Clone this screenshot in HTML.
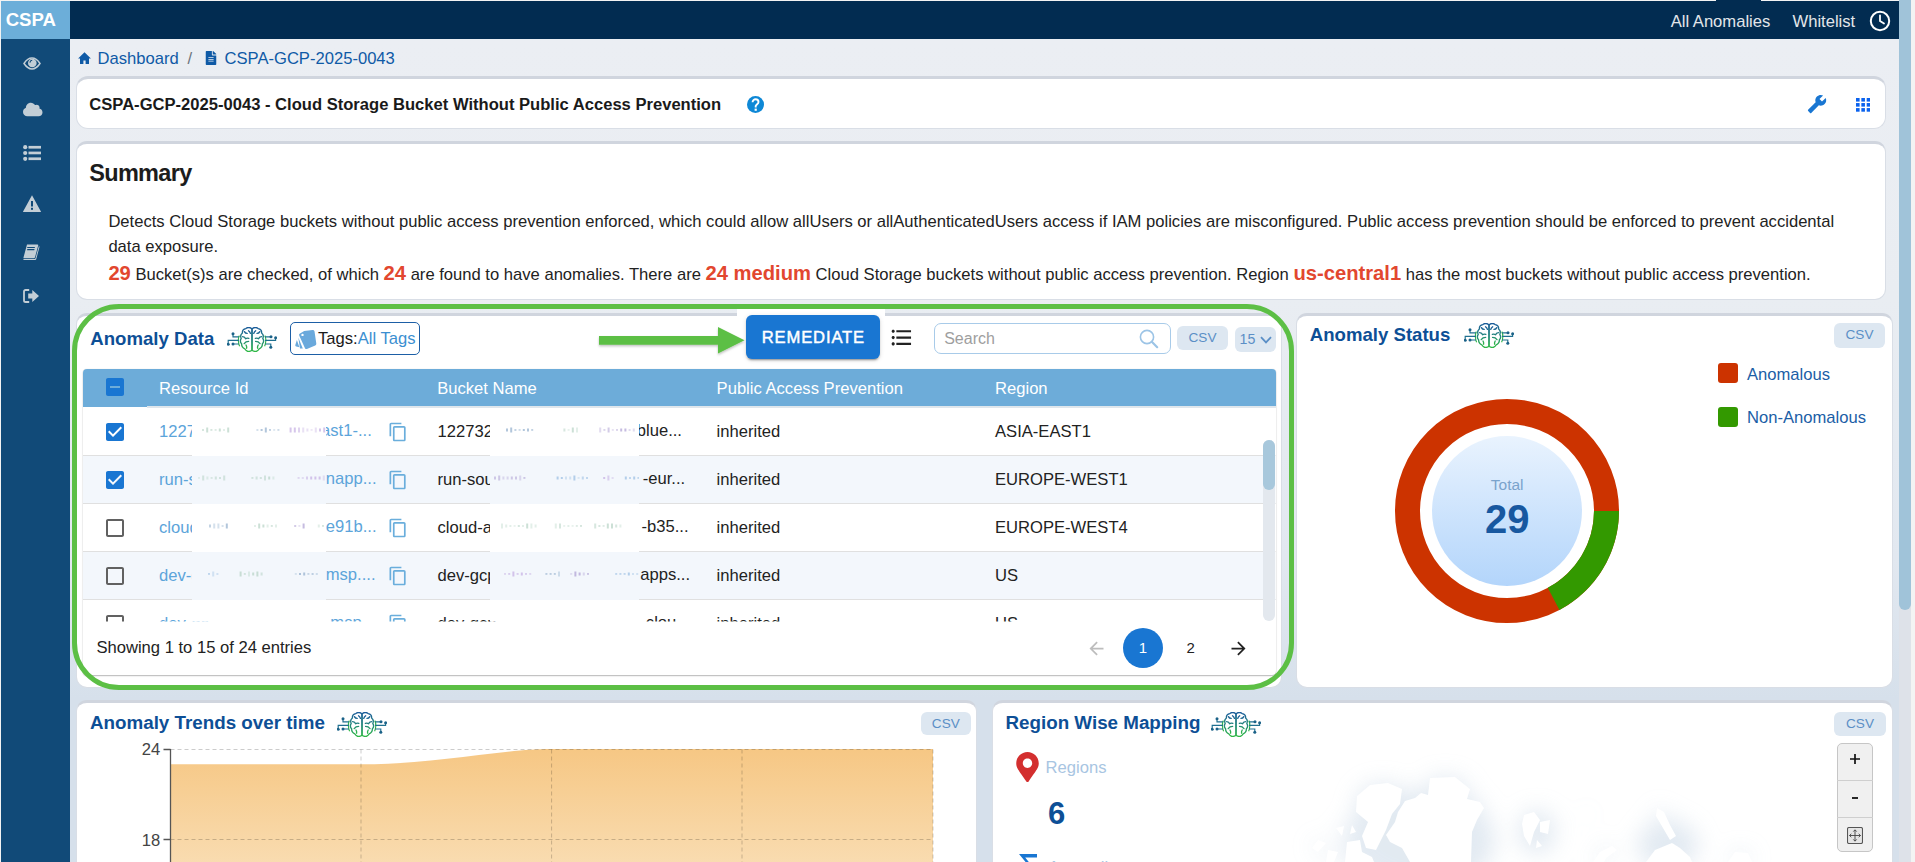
<!DOCTYPE html><html><head><meta charset="utf-8"><style>
html,body{margin:0;padding:0;width:1915px;height:862px;overflow:hidden;background:#fff;font-family:"Liberation Sans", sans-serif}
.t{position:absolute;white-space:nowrap}
.r{position:absolute;box-sizing:border-box}
.card{position:absolute;box-sizing:border-box;background:#fff;border-radius:11px;border:1px solid #d9dee6;border-top:3px solid #d0d5de}
</style></head><body>
<div class="r" style="left:0px;top:0px;width:1915px;height:862px;background:#f3f3f3"></div>
<div class="r" style="left:70px;top:39px;width:1829px;height:823px;background:linear-gradient(180deg,#ebeef3 0px,#e9edf2 260px,#e2e8f0 520px,#d6e0eb 660px,#d6e0eb 823px)"></div>
<div class="r" style="left:70px;top:1px;width:1829px;height:38px;background:#022c51"></div>
<div class="r" style="left:1716px;top:0px;width:45px;height:1px;background:#022c51"></div>
<div class="r" style="left:1px;top:1px;width:69px;height:38px;background:#6caed9"></div>
<div class="t" style="left:5.70px;top:6.80px;font-size:18.6px;line-height:25px;font-weight:700;color:#fff;">CSPA</div>
<div class="r" style="left:1px;top:39px;width:69px;height:823px;background:#114a78"></div>
<div class="r" style="left:1899px;top:0px;width:12px;height:862px;background:#dee2e9"></div>
<div class="r" style="left:1899px;top:-6px;width:12px;height:616px;background:#a0c3d9;border-radius:6px"></div>
<div class="t" style="left:1670.70px;top:11.10px;font-size:16.6px;line-height:22px;font-weight:400;color:#e2e6ea;">All Anomalies</div>
<div class="t" style="left:1792.50px;top:11.10px;font-size:16.6px;line-height:22px;font-weight:400;color:#e2e6ea;">Whitelist</div>
<svg class="r" style="left:1869px;top:9.5px;" width="22" height="22" viewBox="0 0 22 22"><circle cx="11" cy="11" r="9.2" fill="none" stroke="#fff" stroke-width="2"/><path d="M11 5.5V11l4 2.6" fill="none" stroke="#fff" stroke-width="1.8" stroke-linecap="round"/></svg>
<svg class="r" style="left:23px;top:56.5px;" width="18" height="13" viewBox="0 0 18 13"><path d="M1 6.5C3.6 2.6 6.4 1.1 9 1.1S14.4 2.6 17 6.5C14.4 10.4 11.6 11.9 9 11.9S3.6 10.4 1 6.5z" fill="none" stroke="#c3ced6" stroke-width="1.5"/><circle cx="9.3" cy="6" r="4.3" fill="#c3ced6"/><path d="M6.9 5.6A2.6 2.6 0 0 1 9.2 3.2" fill="none" stroke="#114a78" stroke-width="1.1"/></svg>
<svg class="r" style="left:23px;top:101.5px;" width="19.5" height="15" viewBox="0 32 640 448"><path fill="#c3ced6" d="M537.6 226.6c4.1-10.7 6.4-22.4 6.4-34.6 0-53-43-96-96-96-19.7 0-38.1 6-53.3 16.2C367 64.2 315.3 32 256 32c-88.4 0-160 71.6-160 160 0 2.7.1 5.4.2 8.1C40.2 219.8 0 273.2 0 336c0 79.5 64.5 144 144 144h368c70.7 0 128-57.3 128-128 0-61.9-44-113.6-102.4-125.4z"/></svg>
<svg class="r" style="left:23px;top:144.5px;" width="18" height="16" viewBox="0 0 18 16"><g fill="#c3ced6"><circle cx="2.2" cy="2.2" r="2.1"/><circle cx="2.2" cy="8" r="2.1"/><circle cx="2.2" cy="13.8" r="2.1"/><rect x="5.5" y="0.9" width="12.5" height="2.7"/><rect x="5.5" y="6.6" width="12.5" height="2.7"/><rect x="5.5" y="12.4" width="12.5" height="2.7"/></g></svg>
<svg class="r" style="left:23px;top:195px;" width="18" height="17" viewBox="0 0 18 17"><path fill="#c3ced6" d="M9 0.3L17.9 16.4a0.4 0.4 0 0 1-0.3 0.6H0.4a0.4 0.4 0 0 1-0.3-0.6z"/><rect x="8" y="6" width="2" height="5.5" fill="#114a78"/><rect x="8" y="12.8" width="2" height="2" fill="#114a78"/></svg>
<svg class="r" style="left:23px;top:244px;" width="17" height="16" viewBox="0 0 17 16"><path fill="#c3ced6" d="M4 0.5H14.5Q15.5 0.5 15.2 1.6L12 13.3Q11.7 14.2 10.8 14.2H1Q0.3 14.2 0.5 13.5zM15.8 2.3L16.6 2.6 13.2 15.2Q13 16 12.1 16H1.3Q0.4 16 0.2 15.2L0.1 14.6Q0.3 15.1 1 15.1H11.3Q12.2 15.1 12.5 14.3z"/><rect x="5.2" y="3" width="7.6" height="1.1" transform="skewX(-15)" fill="#114a78"/><rect x="5.7" y="5.1" width="7.2" height="1.1" transform="skewX(-15)" fill="#114a78"/></svg>
<svg class="r" style="left:23px;top:288.5px;" width="16" height="14" viewBox="0 0 16 14"><path fill="none" stroke="#c3ced6" stroke-width="1.8" d="M6.2 1H2.6Q1 1 1 2.6V11.4Q1 13 2.6 13H6.2"/><path fill="#c3ced6" d="M5.2 4.6H9.3V1L16 7 9.3 13V9.4H5.2z"/></svg>
<svg class="r" style="left:77.5px;top:51.5px;" width="13" height="12.5" viewBox="0 0 13 12.5"><path fill="#0f5aa6" d="M6.5 0.3L12.9 6.6H11V12.2H7.6V8.4H5.4V12.2H2V6.6H0.1z"/></svg>
<div class="t" style="left:97.50px;top:48.20px;font-size:16.6px;line-height:22px;font-weight:400;color:#0f5aa6;">Dashboard</div>
<div class="t" style="left:187.50px;top:48.20px;font-size:16.6px;line-height:22px;font-weight:400;color:#6c757d;">/</div>
<svg class="r" style="left:205px;top:51px;" width="12" height="14" viewBox="0 0 384 512"><path fill="#0f5aa6" d="M224 136V0H24C10.7 0 0 10.7 0 24v464c0 13.3 10.7 24 24 24h336c13.3 0 24-10.7 24-24V160H248c-13.2 0-24-10.8-24-24zm64 236c0 6.6-5.4 12-12 12H108c-6.6 0-12-5.4-12-12v-8c0-6.6 5.4-12 12-12h168c6.6 0 12 5.4 12 12v8zm0-64c0 6.6-5.4 12-12 12H108c-6.6 0-12-5.4-12-12v-8c0-6.6 5.4-12 12-12h168c6.6 0 12 5.4 12 12v8zm0-72v8c0 6.6-5.4 12-12 12H108c-6.6 0-12-5.4-12-12v-8c0-6.6 5.4-12 12-12h168c6.6 0 12 5.4 12 12zm96-114.1v6.1H256V0h6.1c6.4 0 12.5 2.5 17 7l97.9 98c4.5 4.5 7 10.6 7 16.9z"/></svg>
<div class="t" style="left:224.50px;top:48.20px;font-size:16.6px;line-height:22px;font-weight:400;color:#0f5aa6;">CSPA-GCP-2025-0043</div>
<div class="card" style="left:76px;top:76px;width:1810px;height:53px;border-radius:12px"></div>
<div class="t" style="left:89.30px;top:94.10px;font-size:16.59px;line-height:22px;font-weight:700;color:#1a1a1a;">CSPA-GCP-2025-0043 - Cloud Storage Bucket Without Public Access Prevention</div>
<svg class="r" style="left:746.6px;top:95.7px;" width="17" height="17" viewBox="0 0 17 17"><circle cx="8.5" cy="8.5" r="8.5" fill="#0e88d6"/><path d="M5.6 6.3C5.6 4.4 6.9 3.3 8.6 3.3S11.5 4.4 11.5 6C11.5 7.9 9.2 8.2 8.7 10V11.4" fill="none" stroke="#fff" stroke-width="1.9"/><rect x="7.6" y="12.6" width="2.2" height="2.2" fill="#fff"/></svg>
<svg class="r" style="left:1807px;top:94px;" width="20" height="20" viewBox="0 0 24 24"><path fill="#1976d2" d="M22.7 19l-9.1-9.1c.9-2.3.4-5-1.5-6.9-2-2-5-2.4-7.4-1.3L9 6 6 9 1.6 4.7C.4 7.1.9 10.1 2.9 12.1c1.9 1.9 4.6 2.4 6.9 1.5l9.1 9.1c.4.4 1 .4 1.4 0l2.3-2.3c.5-.4.5-1.1.1-1.4z" transform="translate(24,0) scale(-1,1)"/></svg>
<svg class="r" style="left:1856px;top:98.3px;" width="14.3" height="13.7" viewBox="0 0 14.3 13.7"><g fill="#0a62ee"><rect x="0" y="0" width="3.6" height="3.6"/><rect x="5.35" y="0" width="3.6" height="3.6"/><rect x="10.7" y="0" width="3.6" height="3.6"/><rect x="0" y="5.05" width="3.6" height="3.6"/><rect x="5.35" y="5.05" width="3.6" height="3.6"/><rect x="10.7" y="5.05" width="3.6" height="3.6"/><rect x="0" y="10.1" width="3.6" height="3.6"/><rect x="5.35" y="10.1" width="3.6" height="3.6"/><rect x="10.7" y="10.1" width="3.6" height="3.6"/></g></svg>
<div class="card" style="left:76px;top:141px;width:1810px;height:159px;border-radius:11px"></div>
<div class="t" style="left:89.30px;top:157.50px;font-size:23.5px;line-height:31px;font-weight:700;color:#1c1c1c;letter-spacing:-0.7px;">Summary</div>
<div class="t" style="left:108.40px;top:211.00px;font-size:16.6px;line-height:22px;font-weight:400;color:#222;">Detects Cloud Storage buckets without public access prevention enforced, which could allow allUsers or allAuthenticatedUsers access if IAM policies are misconfigured. Public access prevention should be enforced to prevent accidental</div>
<div class="t" style="left:108.40px;top:235.70px;font-size:16.6px;line-height:22px;font-weight:400;color:#222;">data exposure.</div>
<div class="t" id="l3" style="left:108.4px;top:259.5px;font-size:16.6px;line-height:26px;color:#222"><b style="color:#e2472f;font-size:20.2px">29</b> Bucket(s)s are checked, of which <b style="color:#e2472f;font-size:20.2px">24</b> are found to have anomalies. There are <b style="color:#e2472f;font-size:20.2px">24 medium</b> Cloud Storage buckets without public access prevention. Region <b style="color:#e2472f;font-size:20.2px">us-central1</b> has the most buckets without public access prevention.</div>
<div class="card" style="left:76px;top:313px;width:1206px;height:375px;border-radius:11px"></div>
<div class="t" style="left:90.30px;top:325.90px;font-size:18.6px;line-height:25px;font-weight:700;color:#0d4f96;">Anomaly Data</div>
<svg class="r" style="left:227px;top:326.7px;" width="50" height="25" viewBox="0 0 50 25"><defs><linearGradient id="bg_g" x1="0" y1="0" x2="0" y2="1"><stop offset="0" stop-color="#1b5c9a"/><stop offset="0.55" stop-color="#238a78"/><stop offset="1" stop-color="#2fb845"/></linearGradient></defs>
<g fill="none" stroke="url(#bg_g)" stroke-width="1.35" stroke-linecap="round" stroke-linejoin="round">
<path d="M25 2C24 0.3 20.5-0.2 18.8 1.6 16.6 2 15.2 3.8 15.4 6 13.8 7.2 13.4 9.6 14.2 11.4 13.2 13 13.3 15.4 14.6 16.8 14.6 19.6 16 21.2 17.8 21.8 18.8 24 21.4 25 23.2 24.2 24 24 24.7 23.5 25 23V2z"/>
<path d="M 25 2 C 26 0.3 29.5 -0.2 31.2 1.6 33.4 2 34.8 3.8 34.6 6 36.2 7.2 36.6 9.6 35.8 11.4 36.8 13 36.7 15.4 35.4 16.8 35.4 19.6 34 21.2 32.2 21.8 31.2 24 28.6 25 26.8 24.2 26 24 25.3 23.5 25 23 V 2 z"/>
<path d="M21.5 3.8c0.8 0.6 1.6 1.6 2 2.6M17.4 4.6c0.6 1.2 1.8 1.8 2.8 1.8M15.6 9.6c1.4 0.2 2.6 1 3 2.2 0.8-0.6 2.2-0.8 3.2-0.4M17.2 16.6c1-1.4 2.6-2.2 4.4-2.2M19 18c0.6 1 0.8 2.2 0.6 3.2M28.7 3.8c-0.8 0.6-1.6 1.6-2 2.6M32.8 4.6c-0.6 1.2-1.8 1.8-2.8 1.8M34.6 9.6c-1.4 0.2-2.6 1-3 2.2-0.8-0.6-2.2-0.8-3.2-0.4M33 16.6c-1-1.4-2.6-2.2-4.4-2.2M31.2 18c-0.6 1-0.8 2.2-0.6 3.2"/>
</g>
<g fill="none" stroke-width="1.15">
<path d="M12.4 8.6c-0.9 1.6-1.2 3.6-1 5.4 0.1 1.8 0.5 3.6 1.2 5.2M37.8 8.6c0.9 1.6 1.2 3.6 1 5.4-0.1 1.8-0.5 3.6-1.2 5.2" stroke="#2fb845"/>
<path d="M12 9.8H6V7M12 13.4H1.2V17M12 17H6M38 9.8H43.8M38 13.4H48.6V11M38 17H43.8V20" stroke="#1f7090"/></g>
<g fill="#1b6288"><circle cx="6" cy="6.8" r="1.5"/><circle cx="1.2" cy="17.2" r="1.5"/><circle cx="6" cy="17" r="1.5"/><circle cx="44" cy="9.8" r="1.5"/><circle cx="48.6" cy="10.8" r="1.5"/><circle cx="43.8" cy="20.2" r="1.5"/></g></svg>
<div class="r" style="left:290px;top:322px;width:130px;height:32.5px;border:1.3px solid #1d5fa6;border-radius:5px;background:#fff"></div>
<svg class="r" style="left:295px;top:329.5px;" width="22" height="20" viewBox="0 0 22 20"><path fill="#6aa9dc" d="M9.2 0.9L17.6 0.1Q19 0 19.5 1.3L21.3 13.6Q21.5 15 20.2 15.5L11.9 18.9Q10.6 19.4 10 18.2L4.2 5.4Q3.6 4 5 3.4z"/><circle cx="7.5" cy="4.9" r="1.2" fill="#fff"/><path fill="#6aa9dc" d="M3.3 7.5L7.8 18.6 5 18.4z M1.9 10L4.4 17.2 1.2 16.4Q0 16 0.3 14.9z"/></svg>
<div class="t" style="left:318px;top:326.5px;font-size:16.6px;line-height:24px;color:#1a1a1a">Tags:<span style="color:#3b8fd1">All Tags</span></div>
<div class="r" style="left:737px;top:309px;width:148px;height:8px;background:#fff"></div>
<svg class="r" style="left:596px;top:325px;" width="150" height="32" viewBox="0 0 150 32"><defs><filter id="ash" x="-5%" y="-20%" width="110%" height="160%"><feDropShadow dx="0" dy="1.5" stdDeviation="1" flood-color="#000" flood-opacity="0.25"/></filter></defs><path filter="url(#ash)" fill="#5cbf45" d="M3 11H122V2L148.5 15.3 122 28.5V19.8H3z"/></svg>
<div class="r" style="left:745.5px;top:315px;width:134.5px;height:44px;background:#1976d2;border-radius:6px;box-shadow:0 3px 1px -2px rgba(0,0,0,.2),0 2px 2px 0 rgba(0,0,0,.14),0 1px 5px 0 rgba(0,0,0,.12)"></div>
<div class="t" style="left:761.70px;top:327.20px;font-size:16.6px;line-height:22px;font-weight:400;color:#fff;letter-spacing:0.86px;-webkit-text-stroke:0.45px #fff;">REMEDIATE</div>
<svg class="r" style="left:889.4px;top:325.3px;" width="25.2" height="25.2" viewBox="0 0 24 24"><path fill="#222" d="M4 10.5c-.83 0-1.5.67-1.5 1.5s.67 1.5 1.5 1.5 1.5-.67 1.5-1.5-.67-1.5-1.5-1.5zm0-6c-.83 0-1.5.67-1.5 1.5S3.17 7.5 4 7.5 5.5 6.83 5.5 6 4.83 4.5 4 4.5zm0 12c-.83 0-1.5.68-1.5 1.5s.68 1.5 1.5 1.5 1.5-.68 1.5-1.5-.67-1.5-1.5-1.5zM7 19h14v-2H7v2zm0-6h14v-2H7v2zm0-8v2h14V5H7z"/></svg>
<div class="r" style="left:934px;top:323px;width:237px;height:30.5px;border:1px solid #a8cbe9;border-radius:7px;background:#fff"></div>
<div class="t" style="left:944.20px;top:328.10px;font-size:16px;line-height:21px;font-weight:400;color:#9e9e9e;">Search</div>
<svg class="r" style="left:1139px;top:329px;" width="20" height="20" viewBox="0 0 20 20"><circle cx="8" cy="8" r="6.6" fill="none" stroke="#9cc4e6" stroke-width="1.6"/><path d="M12.8 12.8L18.2 18.2" stroke="#9cc4e6" stroke-width="2.2" stroke-linecap="round"/></svg>
<div class="r" style="left:1177px;top:326.4px;width:51px;height:24.0px;background:#dde7f1;border-radius:6px"></div>
<div class="t" style="left:1177px;top:326.4px;width:51px;height:24.0px;line-height:24.0px;text-align:center;font-size:13.6px;color:#5b8fc6">CSV</div>
<div class="r" style="left:1235px;top:327px;width:41px;height:25px;background:#dde7f1;border-radius:6px"></div>
<div class="t" style="left:1239.60px;top:329.90px;font-size:14.2px;line-height:19px;font-weight:400;color:#5b8fc6;">15</div>
<svg class="r" style="left:1260px;top:336px;" width="12" height="8" viewBox="0 0 12 8"><path d="M1 1.2L6 6.4 11 1.2" fill="none" stroke="#5b8fc6" stroke-width="1.8"/></svg>
<div class="r" style="left:83px;top:369px;width:1193px;height:306px;background:#fff;border-radius:4px;box-shadow:0 1px 1.5px rgba(0,0,0,.28),0 0 1px rgba(0,0,0,.18)"></div>
<div class="r" style="left:83px;top:369px;width:1192.5px;height:38px;background:#6dacd9;border-radius:4px 4px 0 0"></div>
<div class="r" style="left:146.5px;top:405.8px;width:1129.0px;height:1.8000000000000114px;background:#dfe6ec"></div>
<svg class="r" style="left:103px;top:375px;" width="24" height="24" viewBox="0 0 24 24"><path fill="#1976d2" d="M19 3H5c-1.1 0-2 .9-2 2v14c0 1.1.9 2 2 2h14c1.1 0 2-.9 2-2V5c0-1.1-.9-2-2-2zm-2 10H7v-2h10v2z"/></svg>
<div class="t" style="left:159.00px;top:378.10px;font-size:16.6px;line-height:22px;font-weight:400;color:#fff;">Resource Id</div>
<div class="t" style="left:437.20px;top:378.10px;font-size:16.6px;line-height:22px;font-weight:400;color:#fff;">Bucket Name</div>
<div class="t" style="left:716.60px;top:378.10px;font-size:16.6px;line-height:22px;font-weight:400;color:#fff;">Public Access Prevention</div>
<div class="t" style="left:995.00px;top:378.10px;font-size:16.6px;line-height:22px;font-weight:400;color:#fff;">Region</div>
<div style="position:absolute;left:0;top:0;width:1915px;height:862px;clip-path:inset(407px 639.5px 240.5px 83px)">
<div class="r" style="left:83px;top:408px;width:1192.5px;height:48px;background:#ffffff;border-bottom:1px solid #e0e0e0"></div>
<svg class="r" style="left:103px;top:420px;" width="24" height="24" viewBox="0 0 24 24"><path fill="#1976d2" d="M19 3H5c-1.11 0-2 .9-2 2v14c0 1.1.89 2 2 2h14c1.11 0 2-.9 2-2V5c0-1.1-.89-2-2-2zm-9 14l-5-5 1.41-1.41L10 14.17l7.59-7.59L19 8l-9 9z"/></svg>
<div class="t" style="left:159.00px;top:421.00px;font-size:16.6px;line-height:22px;font-weight:400;color:#5ca4da;">122732</div>
<div class="t" style="right:1543.2px;top:421.2px;font-size:16.6px;line-height:20px;color:#5ca4da">east1-...</div>
<svg class="r" style="left:386px;top:419.5px;transform:scale(0.85);transform-origin:12px 12px" width="24" height="24" viewBox="0 0 24 24"><path fill="#6aaedc" d="M16 1H4c-1.1 0-2 .9-2 2v14h2V3h12V1zm3 4H8c-1.1 0-2 .9-2 2v14c0 1.1.9 2 2 2h11c1.1 0 2-.9 2-2V7c0-1.1-.9-2-2-2zm0 16H8V7h11v14z"/></svg>
<div class="t" style="left:437.50px;top:421.00px;font-size:16.6px;line-height:22px;font-weight:400;color:#222;">122732</div>
<div class="t" style="right:1233.0px;top:421.2px;font-size:16.6px;line-height:20px;color:#222">blue...</div>
<div class="t" style="left:716.60px;top:421.00px;font-size:16.6px;line-height:22px;font-weight:400;color:#222;">inherited</div>
<div class="t" style="left:995.00px;top:421.00px;font-size:16.6px;line-height:22px;font-weight:400;color:#222;">ASIA-EAST1</div>
<div class="r" style="left:192px;top:407.5px;width:134px;height:49.0px;background:#ffffff"></div>
<svg class="r" style="left:192px;top:426.2px;" width="134" height="8" viewBox="0 0 134 8"><rect x="10.0" y="3.0" width="2" height="2" fill="#b0d0c0" opacity="0.5"/><rect x="14.2" y="1.5" width="2" height="5" fill="#b0d0c0" opacity="0.65"/><rect x="18.4" y="3.2" width="2" height="1.5" fill="#b0d0c0" opacity="0.65"/><rect x="22.6" y="3.2" width="2" height="1.5" fill="#b0d0c0" opacity="0.5"/><rect x="26.8" y="2.5" width="2" height="3" fill="#b0d0c0" opacity="0.65"/><rect x="31.0" y="3.0" width="2" height="2" fill="#b0d0c0" opacity="0.35"/><rect x="35.2" y="1.5" width="2" height="5" fill="#b0d0c0" opacity="0.65"/><rect x="64.4" y="3.0" width="2" height="2" fill="#88a8c8" opacity="0.35"/><rect x="68.6" y="3.0" width="2" height="2" fill="#88a8c8" opacity="0.65"/><rect x="72.8" y="1.5" width="2" height="5" fill="#88a8c8" opacity="0.65"/><rect x="77.0" y="3.2" width="2" height="1.5" fill="#88a8c8" opacity="0.65"/><rect x="81.2" y="3.2" width="2" height="1.5" fill="#88a8c8" opacity="0.35"/><rect x="85.4" y="3.2" width="2" height="1.5" fill="#88a8c8" opacity="0.5"/><rect x="97.6" y="1.5" width="2" height="5" fill="#c0a8e0" opacity="0.65"/><rect x="101.8" y="1.5" width="2" height="5" fill="#c0a8e0" opacity="0.65"/><rect x="106.0" y="1.5" width="2" height="5" fill="#c0a8e0" opacity="0.5"/><rect x="110.2" y="1.5" width="2" height="5" fill="#c0a8e0" opacity="0.35"/><rect x="114.4" y="2.5" width="2" height="3" fill="#c0a8e0" opacity="0.35"/><rect x="118.6" y="3.2" width="2" height="1.5" fill="#c0a8e0" opacity="0.35"/><rect x="122.8" y="1.5" width="2" height="5" fill="#c0a8e0" opacity="0.35"/><rect x="127.0" y="2.5" width="2" height="3" fill="#c0a8e0" opacity="0.65"/><rect x="131.2" y="1.5" width="2" height="5" fill="#c0a8e0" opacity="0.65"/></svg>
<div class="r" style="left:490px;top:407.5px;width:149px;height:49.0px;background:#ffffff"></div>
<svg class="r" style="left:490px;top:426.2px;" width="149" height="8" viewBox="0 0 149 8"><rect x="16.0" y="2.5" width="2" height="3" fill="#88a8c8" opacity="0.65"/><rect x="20.2" y="1.5" width="2" height="5" fill="#88a8c8" opacity="0.65"/><rect x="24.4" y="3.0" width="2" height="2" fill="#88a8c8" opacity="0.5"/><rect x="28.6" y="3.2" width="2" height="1.5" fill="#88a8c8" opacity="0.5"/><rect x="32.8" y="3.0" width="2" height="2" fill="#88a8c8" opacity="0.65"/><rect x="37.0" y="2.5" width="2" height="3" fill="#88a8c8" opacity="0.65"/><rect x="41.2" y="3.2" width="2" height="1.5" fill="#88a8c8" opacity="0.65"/><rect x="73.4" y="2.5" width="2" height="3" fill="#b0d0c0" opacity="0.5"/><rect x="77.6" y="3.2" width="2" height="1.5" fill="#b0d0c0" opacity="0.35"/><rect x="81.8" y="1.5" width="2" height="5" fill="#b0d0c0" opacity="0.65"/><rect x="86.0" y="1.5" width="2" height="5" fill="#b0d0c0" opacity="0.35"/><rect x="109.2" y="1.5" width="2" height="5" fill="#a898d0" opacity="0.35"/><rect x="113.4" y="3.2" width="2" height="1.5" fill="#a898d0" opacity="0.5"/><rect x="117.6" y="1.5" width="2" height="5" fill="#a898d0" opacity="0.5"/><rect x="121.8" y="3.2" width="2" height="1.5" fill="#a898d0" opacity="0.35"/><rect x="126.0" y="3.2" width="2" height="1.5" fill="#a898d0" opacity="0.5"/><rect x="130.2" y="2.5" width="2" height="3" fill="#a898d0" opacity="0.65"/><rect x="134.4" y="2.5" width="2" height="3" fill="#a898d0" opacity="0.65"/><rect x="138.6" y="3.0" width="2" height="2" fill="#a898d0" opacity="0.35"/><rect x="142.8" y="2.5" width="2" height="3" fill="#a898d0" opacity="0.35"/></svg>
<div class="r" style="left:83px;top:456px;width:1192.5px;height:48px;background:#f3f7fc;border-bottom:1px solid #e0e0e0"></div>
<svg class="r" style="left:103px;top:468px;" width="24" height="24" viewBox="0 0 24 24"><path fill="#1976d2" d="M19 3H5c-1.11 0-2 .9-2 2v14c0 1.1.89 2 2 2h14c1.11 0 2-.9 2-2V5c0-1.1-.89-2-2-2zm-9 14l-5-5 1.41-1.41L10 14.17l7.59-7.59L19 8l-9 9z"/></svg>
<div class="t" style="left:159.00px;top:469.00px;font-size:16.6px;line-height:22px;font-weight:400;color:#5ca4da;">run-sou</div>
<div class="t" style="right:1538.5px;top:469.2px;font-size:16.6px;line-height:20px;color:#5ca4da">napp...</div>
<svg class="r" style="left:386px;top:467.5px;transform:scale(0.85);transform-origin:12px 12px" width="24" height="24" viewBox="0 0 24 24"><path fill="#6aaedc" d="M16 1H4c-1.1 0-2 .9-2 2v14h2V3h12V1zm3 4H8c-1.1 0-2 .9-2 2v14c0 1.1.9 2 2 2h11c1.1 0 2-.9 2-2V7c0-1.1-.9-2-2-2zm0 16H8V7h11v14z"/></svg>
<div class="t" style="left:437.50px;top:469.00px;font-size:16.6px;line-height:22px;font-weight:400;color:#222;">run-sou</div>
<div class="t" style="right:1229.8px;top:469.2px;font-size:16.6px;line-height:20px;color:#222">-eur...</div>
<div class="t" style="left:716.60px;top:469.00px;font-size:16.6px;line-height:22px;font-weight:400;color:#222;">inherited</div>
<div class="t" style="left:995.00px;top:469.00px;font-size:16.6px;line-height:22px;font-weight:400;color:#222;">EUROPE-WEST1</div>
<div class="r" style="left:192px;top:455.5px;width:134px;height:49.0px;background:#f3f7fc"></div>
<svg class="r" style="left:192px;top:474.2px;" width="134" height="8" viewBox="0 0 134 8"><rect x="6.0" y="3.2" width="2" height="1.5" fill="#b0d0c0" opacity="0.35"/><rect x="10.2" y="1.5" width="2" height="5" fill="#b0d0c0" opacity="0.5"/><rect x="14.4" y="2.5" width="2" height="3" fill="#b0d0c0" opacity="0.35"/><rect x="18.6" y="3.2" width="2" height="1.5" fill="#b0d0c0" opacity="0.5"/><rect x="22.8" y="2.5" width="2" height="3" fill="#b0d0c0" opacity="0.5"/><rect x="27.0" y="3.0" width="2" height="2" fill="#b0d0c0" opacity="0.5"/><rect x="31.2" y="1.5" width="2" height="5" fill="#b0d0c0" opacity="0.5"/><rect x="59.4" y="3.2" width="2" height="1.5" fill="#b0d0c0" opacity="0.65"/><rect x="63.6" y="2.5" width="2" height="3" fill="#b0d0c0" opacity="0.5"/><rect x="67.8" y="3.0" width="2" height="2" fill="#b0d0c0" opacity="0.5"/><rect x="72.0" y="1.5" width="2" height="5" fill="#b0d0c0" opacity="0.5"/><rect x="76.2" y="2.5" width="2" height="3" fill="#b0d0c0" opacity="0.65"/><rect x="80.4" y="2.5" width="2" height="3" fill="#b0d0c0" opacity="0.35"/><rect x="105.6" y="3.2" width="2" height="1.5" fill="#c0a8e0" opacity="0.5"/><rect x="109.8" y="3.0" width="2" height="2" fill="#c0a8e0" opacity="0.35"/><rect x="114.0" y="2.5" width="2" height="3" fill="#c0a8e0" opacity="0.5"/><rect x="118.2" y="2.5" width="2" height="3" fill="#c0a8e0" opacity="0.65"/><rect x="122.4" y="2.5" width="2" height="3" fill="#c0a8e0" opacity="0.65"/><rect x="126.6" y="2.5" width="2" height="3" fill="#c0a8e0" opacity="0.65"/><rect x="130.8" y="1.5" width="2" height="5" fill="#c0a8e0" opacity="0.35"/></svg>
<div class="r" style="left:490px;top:455.5px;width:149px;height:49.0px;background:#f3f7fc"></div>
<svg class="r" style="left:490px;top:474.2px;" width="149" height="8" viewBox="0 0 149 8"><rect x="4.0" y="2.5" width="2" height="3" fill="#a898d0" opacity="0.5"/><rect x="8.2" y="1.5" width="2" height="5" fill="#a898d0" opacity="0.5"/><rect x="12.4" y="2.5" width="2" height="3" fill="#a898d0" opacity="0.35"/><rect x="16.6" y="2.5" width="2" height="3" fill="#a898d0" opacity="0.35"/><rect x="20.8" y="2.5" width="2" height="3" fill="#a898d0" opacity="0.5"/><rect x="25.0" y="2.5" width="2" height="3" fill="#a898d0" opacity="0.5"/><rect x="29.2" y="1.5" width="2" height="5" fill="#a898d0" opacity="0.35"/><rect x="33.4" y="3.2" width="2" height="1.5" fill="#a898d0" opacity="0.65"/><rect x="66.6" y="2.5" width="2" height="3" fill="#90b8e0" opacity="0.65"/><rect x="70.8" y="3.0" width="2" height="2" fill="#90b8e0" opacity="0.65"/><rect x="75.0" y="2.5" width="2" height="3" fill="#90b8e0" opacity="0.35"/><rect x="79.2" y="2.5" width="2" height="3" fill="#90b8e0" opacity="0.35"/><rect x="83.4" y="1.5" width="2" height="5" fill="#90b8e0" opacity="0.65"/><rect x="87.6" y="3.2" width="2" height="1.5" fill="#90b8e0" opacity="0.35"/><rect x="91.8" y="2.5" width="2" height="3" fill="#90b8e0" opacity="0.5"/><rect x="96.0" y="3.0" width="2" height="2" fill="#90b8e0" opacity="0.5"/><rect x="113.2" y="3.0" width="2" height="2" fill="#c0a8e0" opacity="0.65"/><rect x="117.4" y="1.5" width="2" height="5" fill="#c0a8e0" opacity="0.5"/><rect x="121.6" y="3.0" width="2" height="2" fill="#c0a8e0" opacity="0.35"/><rect x="134.8" y="2.5" width="2" height="3" fill="#90b8e0" opacity="0.65"/><rect x="139.0" y="3.0" width="2" height="2" fill="#90b8e0" opacity="0.5"/><rect x="143.2" y="2.5" width="2" height="3" fill="#90b8e0" opacity="0.65"/><rect x="147.4" y="3.2" width="2" height="1.5" fill="#90b8e0" opacity="0.65"/><rect x="151.6" y="2.5" width="2" height="3" fill="#90b8e0" opacity="0.65"/><rect x="155.8" y="3.0" width="2" height="2" fill="#90b8e0" opacity="0.5"/><rect x="160.0" y="2.5" width="2" height="3" fill="#90b8e0" opacity="0.65"/></svg>
<div class="r" style="left:83px;top:504px;width:1192.5px;height:48px;background:#ffffff;border-bottom:1px solid #e0e0e0"></div>
<svg class="r" style="left:103px;top:516px;" width="24" height="24" viewBox="0 0 24 24"><path fill="#616161" d="M19 5v14H5V5h14m0-2H5c-1.1 0-2 .9-2 2v14c0 1.1.9 2 2 2h14c1.1 0 2-.9 2-2V5c0-1.1-.9-2-2-2z"/></svg>
<div class="t" style="left:159.00px;top:517.00px;font-size:16.6px;line-height:22px;font-weight:400;color:#5ca4da;">cloud-</div>
<div class="t" style="right:1538.5px;top:517.2px;font-size:16.6px;line-height:20px;color:#5ca4da">e91b...</div>
<svg class="r" style="left:386px;top:515.5px;transform:scale(0.85);transform-origin:12px 12px" width="24" height="24" viewBox="0 0 24 24"><path fill="#6aaedc" d="M16 1H4c-1.1 0-2 .9-2 2v14h2V3h12V1zm3 4H8c-1.1 0-2 .9-2 2v14c0 1.1.9 2 2 2h11c1.1 0 2-.9 2-2V7c0-1.1-.9-2-2-2zm0 16H8V7h11v14z"/></svg>
<div class="t" style="left:437.50px;top:517.00px;font-size:16.6px;line-height:22px;font-weight:400;color:#222;">cloud-a</div>
<div class="t" style="right:1226.5px;top:517.2px;font-size:16.6px;line-height:20px;color:#222">-b35...</div>
<div class="t" style="left:716.60px;top:517.00px;font-size:16.6px;line-height:22px;font-weight:400;color:#222;">inherited</div>
<div class="t" style="left:995.00px;top:517.00px;font-size:16.6px;line-height:22px;font-weight:400;color:#222;">EUROPE-WEST4</div>
<div class="r" style="left:192px;top:503.5px;width:134px;height:49.0px;background:#ffffff"></div>
<svg class="r" style="left:192px;top:522.2px;" width="134" height="8" viewBox="0 0 134 8"><rect x="17.0" y="2.5" width="2" height="3" fill="#88a8c8" opacity="0.5"/><rect x="21.2" y="1.5" width="2" height="5" fill="#88a8c8" opacity="0.35"/><rect x="25.4" y="1.5" width="2" height="5" fill="#88a8c8" opacity="0.35"/><rect x="29.6" y="3.0" width="2" height="2" fill="#88a8c8" opacity="0.35"/><rect x="33.8" y="1.5" width="2" height="5" fill="#88a8c8" opacity="0.65"/><rect x="62.0" y="3.0" width="2" height="2" fill="#b0d0c0" opacity="0.35"/><rect x="66.2" y="1.5" width="2" height="5" fill="#b0d0c0" opacity="0.65"/><rect x="70.4" y="2.5" width="2" height="3" fill="#b0d0c0" opacity="0.65"/><rect x="74.6" y="2.5" width="2" height="3" fill="#b0d0c0" opacity="0.35"/><rect x="78.8" y="3.2" width="2" height="1.5" fill="#b0d0c0" opacity="0.65"/><rect x="83.0" y="2.5" width="2" height="3" fill="#b0d0c0" opacity="0.35"/><rect x="102.2" y="3.0" width="2" height="2" fill="#a898d0" opacity="0.5"/><rect x="106.4" y="3.2" width="2" height="1.5" fill="#a898d0" opacity="0.35"/><rect x="110.6" y="1.5" width="2" height="5" fill="#a898d0" opacity="0.65"/><rect x="125.8" y="2.5" width="2" height="3" fill="#b0d0c0" opacity="0.35"/><rect x="130.0" y="3.2" width="2" height="1.5" fill="#b0d0c0" opacity="0.65"/><rect x="134.2" y="1.5" width="2" height="5" fill="#b0d0c0" opacity="0.35"/><rect x="138.4" y="3.2" width="2" height="1.5" fill="#b0d0c0" opacity="0.5"/></svg>
<div class="r" style="left:490px;top:503.5px;width:149px;height:49.0px;background:#ffffff"></div>
<svg class="r" style="left:490px;top:522.2px;" width="149" height="8" viewBox="0 0 149 8"><rect x="11.0" y="1.5" width="2" height="5" fill="#b0d0c0" opacity="0.35"/><rect x="15.2" y="2.5" width="2" height="3" fill="#b0d0c0" opacity="0.35"/><rect x="19.4" y="3.0" width="2" height="2" fill="#b0d0c0" opacity="0.35"/><rect x="23.6" y="3.2" width="2" height="1.5" fill="#b0d0c0" opacity="0.35"/><rect x="27.8" y="3.0" width="2" height="2" fill="#b0d0c0" opacity="0.5"/><rect x="32.0" y="3.0" width="2" height="2" fill="#b0d0c0" opacity="0.35"/><rect x="36.2" y="1.5" width="2" height="5" fill="#b0d0c0" opacity="0.65"/><rect x="40.4" y="1.5" width="2" height="5" fill="#b0d0c0" opacity="0.35"/><rect x="44.6" y="2.5" width="2" height="3" fill="#b0d0c0" opacity="0.35"/><rect x="64.8" y="1.5" width="2" height="5" fill="#b0d0c0" opacity="0.35"/><rect x="69.0" y="1.5" width="2" height="5" fill="#b0d0c0" opacity="0.5"/><rect x="73.2" y="3.2" width="2" height="1.5" fill="#b0d0c0" opacity="0.35"/><rect x="77.4" y="3.0" width="2" height="2" fill="#b0d0c0" opacity="0.35"/><rect x="81.6" y="3.2" width="2" height="1.5" fill="#b0d0c0" opacity="0.35"/><rect x="85.8" y="3.2" width="2" height="1.5" fill="#b0d0c0" opacity="0.5"/><rect x="90.0" y="3.2" width="2" height="1.5" fill="#b0d0c0" opacity="0.65"/><rect x="104.2" y="1.5" width="2" height="5" fill="#b0d0c0" opacity="0.5"/><rect x="108.4" y="3.0" width="2" height="2" fill="#b0d0c0" opacity="0.5"/><rect x="112.6" y="3.2" width="2" height="1.5" fill="#b0d0c0" opacity="0.5"/><rect x="116.8" y="1.5" width="2" height="5" fill="#b0d0c0" opacity="0.65"/><rect x="121.0" y="1.5" width="2" height="5" fill="#b0d0c0" opacity="0.65"/><rect x="125.2" y="2.5" width="2" height="3" fill="#b0d0c0" opacity="0.5"/><rect x="129.4" y="2.5" width="2" height="3" fill="#b0d0c0" opacity="0.35"/></svg>
<div class="r" style="left:83px;top:552px;width:1192.5px;height:48px;background:#f3f7fc;border-bottom:1px solid #e0e0e0"></div>
<svg class="r" style="left:103px;top:564px;" width="24" height="24" viewBox="0 0 24 24"><path fill="#616161" d="M19 5v14H5V5h14m0-2H5c-1.1 0-2 .9-2 2v14c0 1.1.9 2 2 2h14c1.1 0 2-.9 2-2V5c0-1.1-.9-2-2-2z"/></svg>
<div class="t" style="left:159.00px;top:565.00px;font-size:16.6px;line-height:22px;font-weight:400;color:#5ca4da;">dev-gc</div>
<div class="t" style="right:1539.5px;top:565.2px;font-size:16.6px;line-height:20px;color:#5ca4da">msp....</div>
<svg class="r" style="left:386px;top:563.5px;transform:scale(0.85);transform-origin:12px 12px" width="24" height="24" viewBox="0 0 24 24"><path fill="#6aaedc" d="M16 1H4c-1.1 0-2 .9-2 2v14h2V3h12V1zm3 4H8c-1.1 0-2 .9-2 2v14c0 1.1.9 2 2 2h11c1.1 0 2-.9 2-2V7c0-1.1-.9-2-2-2zm0 16H8V7h11v14z"/></svg>
<div class="t" style="left:437.50px;top:565.00px;font-size:16.6px;line-height:22px;font-weight:400;color:#222;">dev-gcp</div>
<div class="t" style="right:1224.9px;top:565.2px;font-size:16.6px;line-height:20px;color:#222">apps...</div>
<div class="t" style="left:716.60px;top:565.00px;font-size:16.6px;line-height:22px;font-weight:400;color:#222;">inherited</div>
<div class="t" style="left:995.00px;top:565.00px;font-size:16.6px;line-height:22px;font-weight:400;color:#222;">US</div>
<div class="r" style="left:192px;top:551.5px;width:134px;height:49.0px;background:#f3f7fc"></div>
<svg class="r" style="left:192px;top:570.2px;" width="134" height="8" viewBox="0 0 134 8"><rect x="16.0" y="3.2" width="2" height="1.5" fill="#90b8e0" opacity="0.65"/><rect x="20.2" y="1.5" width="2" height="5" fill="#90b8e0" opacity="0.35"/><rect x="24.4" y="3.0" width="2" height="2" fill="#90b8e0" opacity="0.35"/><rect x="47.6" y="1.5" width="2" height="5" fill="#b0d0c0" opacity="0.65"/><rect x="51.8" y="3.2" width="2" height="1.5" fill="#b0d0c0" opacity="0.65"/><rect x="56.0" y="1.5" width="2" height="5" fill="#b0d0c0" opacity="0.35"/><rect x="60.2" y="2.5" width="2" height="3" fill="#b0d0c0" opacity="0.65"/><rect x="64.4" y="1.5" width="2" height="5" fill="#b0d0c0" opacity="0.65"/><rect x="68.6" y="2.5" width="2" height="3" fill="#b0d0c0" opacity="0.5"/><rect x="102.8" y="3.2" width="2" height="1.5" fill="#88a8c8" opacity="0.35"/><rect x="107.0" y="3.0" width="2" height="2" fill="#88a8c8" opacity="0.65"/><rect x="111.2" y="2.5" width="2" height="3" fill="#88a8c8" opacity="0.65"/><rect x="115.4" y="3.2" width="2" height="1.5" fill="#88a8c8" opacity="0.5"/><rect x="119.6" y="3.0" width="2" height="2" fill="#88a8c8" opacity="0.5"/><rect x="123.8" y="3.0" width="2" height="2" fill="#88a8c8" opacity="0.35"/></svg>
<div class="r" style="left:490px;top:551.5px;width:149px;height:49.0px;background:#f3f7fc"></div>
<svg class="r" style="left:490px;top:570.2px;" width="149" height="8" viewBox="0 0 149 8"><rect x="14.0" y="3.2" width="2" height="1.5" fill="#c0a8e0" opacity="0.5"/><rect x="18.2" y="3.2" width="2" height="1.5" fill="#c0a8e0" opacity="0.65"/><rect x="22.4" y="1.5" width="2" height="5" fill="#c0a8e0" opacity="0.65"/><rect x="26.6" y="3.2" width="2" height="1.5" fill="#c0a8e0" opacity="0.65"/><rect x="30.8" y="2.5" width="2" height="3" fill="#c0a8e0" opacity="0.65"/><rect x="35.0" y="3.2" width="2" height="1.5" fill="#c0a8e0" opacity="0.65"/><rect x="39.2" y="3.2" width="2" height="1.5" fill="#c0a8e0" opacity="0.5"/><rect x="55.4" y="3.2" width="2" height="1.5" fill="#88a8c8" opacity="0.65"/><rect x="59.6" y="3.2" width="2" height="1.5" fill="#88a8c8" opacity="0.65"/><rect x="63.8" y="3.2" width="2" height="1.5" fill="#88a8c8" opacity="0.65"/><rect x="68.0" y="1.5" width="2" height="5" fill="#88a8c8" opacity="0.35"/><rect x="80.2" y="3.2" width="2" height="1.5" fill="#a898d0" opacity="0.35"/><rect x="84.4" y="1.5" width="2" height="5" fill="#a898d0" opacity="0.65"/><rect x="88.6" y="2.5" width="2" height="3" fill="#a898d0" opacity="0.65"/><rect x="92.8" y="2.5" width="2" height="3" fill="#a898d0" opacity="0.35"/><rect x="97.0" y="3.2" width="2" height="1.5" fill="#a898d0" opacity="0.65"/><rect x="125.2" y="3.2" width="2" height="1.5" fill="#90b8e0" opacity="0.65"/><rect x="129.4" y="3.2" width="2" height="1.5" fill="#90b8e0" opacity="0.65"/><rect x="133.6" y="3.2" width="2" height="1.5" fill="#90b8e0" opacity="0.65"/><rect x="137.8" y="2.5" width="2" height="3" fill="#90b8e0" opacity="0.65"/><rect x="142.0" y="3.0" width="2" height="2" fill="#90b8e0" opacity="0.35"/><rect x="146.2" y="3.0" width="2" height="2" fill="#90b8e0" opacity="0.35"/><rect x="150.4" y="3.0" width="2" height="2" fill="#90b8e0" opacity="0.5"/></svg>
<div class="r" style="left:83px;top:600px;width:1192.5px;height:48px;background:#ffffff;border-bottom:1px solid #e0e0e0"></div>
<svg class="r" style="left:103px;top:612px;" width="24" height="24" viewBox="0 0 24 24"><path fill="#616161" d="M19 5v14H5V5h14m0-2H5c-1.1 0-2 .9-2 2v14c0 1.1.9 2 2 2h14c1.1 0 2-.9 2-2V5c0-1.1-.9-2-2-2z"/></svg>
<div class="t" style="left:159.00px;top:613.00px;font-size:16.6px;line-height:22px;font-weight:400;color:#5ca4da;">dev-gc</div>
<div class="t" style="right:1539.5px;top:613.2px;font-size:16.6px;line-height:20px;color:#5ca4da">msp...</div>
<svg class="r" style="left:386px;top:611.5px;transform:scale(0.85);transform-origin:12px 12px" width="24" height="24" viewBox="0 0 24 24"><path fill="#6aaedc" d="M16 1H4c-1.1 0-2 .9-2 2v14h2V3h12V1zm3 4H8c-1.1 0-2 .9-2 2v14c0 1.1.9 2 2 2h11c1.1 0 2-.9 2-2V7c0-1.1-.9-2-2-2zm0 16H8V7h11v14z"/></svg>
<div class="t" style="left:437.50px;top:613.00px;font-size:16.6px;line-height:22px;font-weight:400;color:#222;">dev-gcp</div>
<div class="t" style="right:1224.9px;top:613.2px;font-size:16.6px;line-height:20px;color:#222">clou...</div>
<div class="t" style="left:716.60px;top:613.00px;font-size:16.6px;line-height:22px;font-weight:400;color:#222;">inherited</div>
<div class="t" style="left:995.00px;top:613.00px;font-size:16.6px;line-height:22px;font-weight:400;color:#222;">US</div>
<div class="r" style="left:192px;top:599.5px;width:134px;height:49.0px;background:#ffffff"></div>
<div class="r" style="left:490px;top:599.5px;width:149px;height:49.0px;background:#ffffff"></div>
</div>
<div class="r" style="left:1263.4px;top:439.6px;width:11.399999999999864px;height:181.89999999999998px;background:#e3e8ee;border-radius:6px"></div>
<div class="r" style="left:1263.4px;top:439.6px;width:11.399999999999864px;height:50.39999999999998px;background:#a8c8dc;border-radius:6px"></div>
<div class="t" style="left:96.40px;top:637.10px;font-size:16.6px;line-height:22px;font-weight:400;color:#222;">Showing 1 to 15 of 24 entries</div>
<svg class="r" style="left:1085.5px;top:637.5px;" width="21" height="21" viewBox="0 0 24 24"><path fill="#bdbdbd" d="M20 11H7.83l5.59-5.59L12 4l-8 8 8 8 1.41-1.41L7.83 13H20v-2z"/></svg>
<div class="r" style="left:1123px;top:628px;width:40px;height:40px;background:#1976d2;border-radius:50%"></div>
<div class="t" style="left:1123px;top:628px;width:40px;height:40px;line-height:40px;text-align:center;font-size:15px;color:#fff">1</div>
<div class="t" style="left:1170.6px;top:628px;width:40px;height:40px;line-height:40px;text-align:center;font-size:15px;color:#222">2</div>
<svg class="r" style="left:1227.5px;top:637.5px;" width="21" height="21" viewBox="0 0 24 24"><path fill="#222" d="M12 4l-1.41 1.41L16.17 11H4v2h12.17l-5.58 5.59L12 20l8-8z"/></svg>
<div class="r" style="left:72px;top:304px;width:1222px;height:385.5px;border:5px solid #5cbf45;border-radius:47px"></div>
<div class="card" style="left:1295.5px;top:313px;width:597px;height:375px;border-radius:11px"></div>
<div class="t" style="left:1309.80px;top:321.80px;font-size:18.6px;line-height:25px;font-weight:700;color:#0d4f96;">Anomaly Status</div>
<svg class="r" style="left:1464px;top:323px;" width="50" height="25" viewBox="0 0 50 25"><defs><linearGradient id="bg_g" x1="0" y1="0" x2="0" y2="1"><stop offset="0" stop-color="#1b5c9a"/><stop offset="0.55" stop-color="#238a78"/><stop offset="1" stop-color="#2fb845"/></linearGradient></defs>
<g fill="none" stroke="url(#bg_g)" stroke-width="1.35" stroke-linecap="round" stroke-linejoin="round">
<path d="M25 2C24 0.3 20.5-0.2 18.8 1.6 16.6 2 15.2 3.8 15.4 6 13.8 7.2 13.4 9.6 14.2 11.4 13.2 13 13.3 15.4 14.6 16.8 14.6 19.6 16 21.2 17.8 21.8 18.8 24 21.4 25 23.2 24.2 24 24 24.7 23.5 25 23V2z"/>
<path d="M 25 2 C 26 0.3 29.5 -0.2 31.2 1.6 33.4 2 34.8 3.8 34.6 6 36.2 7.2 36.6 9.6 35.8 11.4 36.8 13 36.7 15.4 35.4 16.8 35.4 19.6 34 21.2 32.2 21.8 31.2 24 28.6 25 26.8 24.2 26 24 25.3 23.5 25 23 V 2 z"/>
<path d="M21.5 3.8c0.8 0.6 1.6 1.6 2 2.6M17.4 4.6c0.6 1.2 1.8 1.8 2.8 1.8M15.6 9.6c1.4 0.2 2.6 1 3 2.2 0.8-0.6 2.2-0.8 3.2-0.4M17.2 16.6c1-1.4 2.6-2.2 4.4-2.2M19 18c0.6 1 0.8 2.2 0.6 3.2M28.7 3.8c-0.8 0.6-1.6 1.6-2 2.6M32.8 4.6c-0.6 1.2-1.8 1.8-2.8 1.8M34.6 9.6c-1.4 0.2-2.6 1-3 2.2-0.8-0.6-2.2-0.8-3.2-0.4M33 16.6c-1-1.4-2.6-2.2-4.4-2.2M31.2 18c-0.6 1-0.8 2.2-0.6 3.2"/>
</g>
<g fill="none" stroke-width="1.15">
<path d="M12.4 8.6c-0.9 1.6-1.2 3.6-1 5.4 0.1 1.8 0.5 3.6 1.2 5.2M37.8 8.6c0.9 1.6 1.2 3.6 1 5.4-0.1 1.8-0.5 3.6-1.2 5.2" stroke="#2fb845"/>
<path d="M12 9.8H6V7M12 13.4H1.2V17M12 17H6M38 9.8H43.8M38 13.4H48.6V11M38 17H43.8V20" stroke="#1f7090"/></g>
<g fill="#1b6288"><circle cx="6" cy="6.8" r="1.5"/><circle cx="1.2" cy="17.2" r="1.5"/><circle cx="6" cy="17" r="1.5"/><circle cx="44" cy="9.8" r="1.5"/><circle cx="48.6" cy="10.8" r="1.5"/><circle cx="43.8" cy="20.2" r="1.5"/></g></svg>
<div class="r" style="left:1834px;top:322.7px;width:51px;height:24.900000000000034px;background:#dde7f1;border-radius:6px"></div>
<div class="t" style="left:1834px;top:322.7px;width:51px;height:24.900000000000034px;line-height:24.900000000000034px;text-align:center;font-size:13.6px;color:#5b8fc6">CSV</div>
<div class="r" style="left:1717.6px;top:363.4px;width:20.40000000000009px;height:19.900000000000034px;background:#cc3300;border-radius:3px"></div>
<div class="t" style="left:1747.00px;top:364.30px;font-size:16.6px;line-height:22px;font-weight:400;color:#1b5ea6;">Anomalous</div>
<div class="r" style="left:1717.6px;top:406.8px;width:20.40000000000009px;height:19.899999999999977px;background:#339900;border-radius:3px"></div>
<div class="t" style="left:1747.00px;top:406.90px;font-size:16.6px;line-height:22px;font-weight:400;color:#1b5ea6;">Non-Anomalous</div>
<svg class="r" style="left:1395px;top:398.5px;" width="224" height="224" viewBox="0 0 224 224"><defs><linearGradient id="tg" x1="0" y1="0" x2="0" y2="1"><stop offset="0" stop-color="#e9f3fe"/><stop offset="1" stop-color="#b3d5fb"/></linearGradient></defs><circle cx="112" cy="112" r="99.5" fill="none" stroke="#cc3300" stroke-width="25"/><path d="M224.00 112.00A112 112 0 0 1 164.46 210.95L152.75 188.87A87 87 0 0 0 199.00 112.00z" fill="#339900"/><circle cx="112" cy="112" r="75" fill="url(#tg)"/></svg>
<div class="t" style="left:1490.80px;top:473.80px;font-size:15.5px;line-height:21px;font-weight:400;color:#7aa3cc;">Total</div>
<div class="t" style="left:1485.10px;top:492.80px;font-size:40px;line-height:52px;font-weight:700;color:#1858a0;">29</div>
<div class="card" style="left:76px;top:700px;width:901px;height:190px;border-radius:11px"></div>
<div class="t" style="left:90.00px;top:710.00px;font-size:18.8px;line-height:25px;font-weight:700;color:#0d4f96;">Anomaly Trends over time</div>
<svg class="r" style="left:337px;top:711.7px;" width="50" height="25" viewBox="0 0 50 25"><defs><linearGradient id="bg_g" x1="0" y1="0" x2="0" y2="1"><stop offset="0" stop-color="#1b5c9a"/><stop offset="0.55" stop-color="#238a78"/><stop offset="1" stop-color="#2fb845"/></linearGradient></defs>
<g fill="none" stroke="url(#bg_g)" stroke-width="1.35" stroke-linecap="round" stroke-linejoin="round">
<path d="M25 2C24 0.3 20.5-0.2 18.8 1.6 16.6 2 15.2 3.8 15.4 6 13.8 7.2 13.4 9.6 14.2 11.4 13.2 13 13.3 15.4 14.6 16.8 14.6 19.6 16 21.2 17.8 21.8 18.8 24 21.4 25 23.2 24.2 24 24 24.7 23.5 25 23V2z"/>
<path d="M 25 2 C 26 0.3 29.5 -0.2 31.2 1.6 33.4 2 34.8 3.8 34.6 6 36.2 7.2 36.6 9.6 35.8 11.4 36.8 13 36.7 15.4 35.4 16.8 35.4 19.6 34 21.2 32.2 21.8 31.2 24 28.6 25 26.8 24.2 26 24 25.3 23.5 25 23 V 2 z"/>
<path d="M21.5 3.8c0.8 0.6 1.6 1.6 2 2.6M17.4 4.6c0.6 1.2 1.8 1.8 2.8 1.8M15.6 9.6c1.4 0.2 2.6 1 3 2.2 0.8-0.6 2.2-0.8 3.2-0.4M17.2 16.6c1-1.4 2.6-2.2 4.4-2.2M19 18c0.6 1 0.8 2.2 0.6 3.2M28.7 3.8c-0.8 0.6-1.6 1.6-2 2.6M32.8 4.6c-0.6 1.2-1.8 1.8-2.8 1.8M34.6 9.6c-1.4 0.2-2.6 1-3 2.2-0.8-0.6-2.2-0.8-3.2-0.4M33 16.6c-1-1.4-2.6-2.2-4.4-2.2M31.2 18c-0.6 1-0.8 2.2-0.6 3.2"/>
</g>
<g fill="none" stroke-width="1.15">
<path d="M12.4 8.6c-0.9 1.6-1.2 3.6-1 5.4 0.1 1.8 0.5 3.6 1.2 5.2M37.8 8.6c0.9 1.6 1.2 3.6 1 5.4-0.1 1.8-0.5 3.6-1.2 5.2" stroke="#2fb845"/>
<path d="M12 9.8H6V7M12 13.4H1.2V17M12 17H6M38 9.8H43.8M38 13.4H48.6V11M38 17H43.8V20" stroke="#1f7090"/></g>
<g fill="#1b6288"><circle cx="6" cy="6.8" r="1.5"/><circle cx="1.2" cy="17.2" r="1.5"/><circle cx="6" cy="17" r="1.5"/><circle cx="44" cy="9.8" r="1.5"/><circle cx="48.6" cy="10.8" r="1.5"/><circle cx="43.8" cy="20.2" r="1.5"/></g></svg>
<div class="r" style="left:921px;top:711.8px;width:49.700000000000045px;height:23.600000000000023px;background:#dde7f1;border-radius:6px"></div>
<div class="t" style="left:921px;top:711.8px;width:49.700000000000045px;height:23.600000000000023px;line-height:23.600000000000023px;text-align:center;font-size:13.6px;color:#5b8fc6">CSV</div>
<svg class="r" style="left:120px;top:740px;" width="860" height="122" viewBox="0 0 860 122"><defs><linearGradient id="ag" x1="0" y1="0" x2="0" y2="1"><stop offset="0" stop-color="#f6c784"/><stop offset="1" stop-color="#f9ddb3"/></linearGradient></defs>
<path d="M50.5 24.3H241C300 24.3 350 15 400 10.5 415 9.3 425 9 431.6 9H813V130H50.5z" fill="url(#ag)"/>
<g stroke="rgba(0,0,0,0.2)" stroke-width="1" stroke-dasharray="4 3" fill="none"><path d="M50.5 9.5H813M50.5 99.5H813M241 9.5V122M431.6 9.5V122M622 9.5V122M813 9.5V122"/></g>
<path d="M50.5 9V122" stroke="#555" stroke-width="1.3"/><path d="M43.5 9.5H50.5M43.5 99.5H50.5" stroke="#555" stroke-width="1.3"/></svg>
<div class="t" style="left:141.80px;top:739.30px;font-size:16.6px;line-height:22px;font-weight:400;color:#444;">24</div>
<div class="t" style="left:141.80px;top:829.80px;font-size:16.6px;line-height:22px;font-weight:400;color:#444;">18</div>
<div class="card" style="left:991.5px;top:700px;width:901px;height:190px;border-radius:11px"></div>
<div class="t" style="left:1005.50px;top:710.00px;font-size:18.8px;line-height:25px;font-weight:700;color:#0d4f96;">Region Wise Mapping</div>
<svg class="r" style="left:1211px;top:711.7px;" width="50" height="25" viewBox="0 0 50 25"><defs><linearGradient id="bg_g" x1="0" y1="0" x2="0" y2="1"><stop offset="0" stop-color="#1b5c9a"/><stop offset="0.55" stop-color="#238a78"/><stop offset="1" stop-color="#2fb845"/></linearGradient></defs>
<g fill="none" stroke="url(#bg_g)" stroke-width="1.35" stroke-linecap="round" stroke-linejoin="round">
<path d="M25 2C24 0.3 20.5-0.2 18.8 1.6 16.6 2 15.2 3.8 15.4 6 13.8 7.2 13.4 9.6 14.2 11.4 13.2 13 13.3 15.4 14.6 16.8 14.6 19.6 16 21.2 17.8 21.8 18.8 24 21.4 25 23.2 24.2 24 24 24.7 23.5 25 23V2z"/>
<path d="M 25 2 C 26 0.3 29.5 -0.2 31.2 1.6 33.4 2 34.8 3.8 34.6 6 36.2 7.2 36.6 9.6 35.8 11.4 36.8 13 36.7 15.4 35.4 16.8 35.4 19.6 34 21.2 32.2 21.8 31.2 24 28.6 25 26.8 24.2 26 24 25.3 23.5 25 23 V 2 z"/>
<path d="M21.5 3.8c0.8 0.6 1.6 1.6 2 2.6M17.4 4.6c0.6 1.2 1.8 1.8 2.8 1.8M15.6 9.6c1.4 0.2 2.6 1 3 2.2 0.8-0.6 2.2-0.8 3.2-0.4M17.2 16.6c1-1.4 2.6-2.2 4.4-2.2M19 18c0.6 1 0.8 2.2 0.6 3.2M28.7 3.8c-0.8 0.6-1.6 1.6-2 2.6M32.8 4.6c-0.6 1.2-1.8 1.8-2.8 1.8M34.6 9.6c-1.4 0.2-2.6 1-3 2.2-0.8-0.6-2.2-0.8-3.2-0.4M33 16.6c-1-1.4-2.6-2.2-4.4-2.2M31.2 18c-0.6 1-0.8 2.2-0.6 3.2"/>
</g>
<g fill="none" stroke-width="1.15">
<path d="M12.4 8.6c-0.9 1.6-1.2 3.6-1 5.4 0.1 1.8 0.5 3.6 1.2 5.2M37.8 8.6c0.9 1.6 1.2 3.6 1 5.4-0.1 1.8-0.5 3.6-1.2 5.2" stroke="#2fb845"/>
<path d="M12 9.8H6V7M12 13.4H1.2V17M12 17H6M38 9.8H43.8M38 13.4H48.6V11M38 17H43.8V20" stroke="#1f7090"/></g>
<g fill="#1b6288"><circle cx="6" cy="6.8" r="1.5"/><circle cx="1.2" cy="17.2" r="1.5"/><circle cx="6" cy="17" r="1.5"/><circle cx="44" cy="9.8" r="1.5"/><circle cx="48.6" cy="10.8" r="1.5"/><circle cx="43.8" cy="20.2" r="1.5"/></g></svg>
<div class="r" style="left:1834px;top:712px;width:52px;height:23.600000000000023px;background:#dde7f1;border-radius:6px"></div>
<div class="t" style="left:1834px;top:712px;width:52px;height:23.600000000000023px;line-height:23.600000000000023px;text-align:center;font-size:13.6px;color:#5b8fc6">CSV</div>
<svg class="r" style="left:0px;top:0px" width="1915" height="862" viewBox="0 0 1915 862"><defs><filter id="mb" x="1200" y="700" width="700" height="200" filterUnits="userSpaceOnUse"><feGaussianBlur stdDeviation="11"/></filter>
<clipPath id="mc"><rect x="992" y="703" width="899" height="159"/></clipPath></defs>
<g clip-path="url(#mc)"><g filter="url(#mb)" fill="#cbd9e7" opacity="0.55"><path d="M1430 778L1455 777 1470 789 1467 799 1480 802 1484 808 1477 820 1472 832 1471 862H1410L1402 848 1390 842 1386 835 1395 822 1398 812 1405 801 1415 798 1421 793 1428 795z"/><path d="M1370 785L1388 783 1402 789 1400 804 1392 814 1386 830 1376 850 1366 848 1362 836 1368 822 1356 812 1357 796z"/><path d="M1347 842L1360 840 1362 852 1372 857 1374 862H1345z"/><path d="M1318 840L1326 843 1318 852 1312 848z"/><path d="M1328 850L1338 852 1334 862H1326z"/><path d="M1336 828L1344 826 1342 836z"/><path d="M1352 825L1356 832 1350 834z"/><path d="M1524 815L1534 812 1540 820 1534 832 1530 846 1524 836 1522 824zM1540 822L1550 820 1548 834 1540 832z M1537 840L1542 846 1536 848z"/><path d="M1584 812L1590 815 1585 818z"/><path d="M1657 808L1664 812 1670 825 1676 836 1670 840 1663 828 1656 816z"/><path d="M1593 862L1600 852 1612 846 1617 850 1606 858 1604 862z"/><path d="M1646 862L1655 850 1672 843 1680 848 1690 857 1692 862z"/><path d="M1728 862L1735 852 1748 853 1752 862z"/><ellipse cx="1420" cy="840" rx="75" ry="50"/><ellipse cx="1537" cy="832" rx="18" ry="22"/><ellipse cx="1668" cy="845" rx="30" ry="25"/></g>
<g fill="#fff"><path d="M1430 778L1455 777 1470 789 1467 799 1480 802 1484 808 1477 820 1472 832 1471 862H1410L1402 848 1390 842 1386 835 1395 822 1398 812 1405 801 1415 798 1421 793 1428 795z"/><path d="M1370 785L1388 783 1402 789 1400 804 1392 814 1386 830 1376 850 1366 848 1362 836 1368 822 1356 812 1357 796z"/><path d="M1347 842L1360 840 1362 852 1372 857 1374 862H1345z"/><path d="M1318 840L1326 843 1318 852 1312 848z"/><path d="M1328 850L1338 852 1334 862H1326z"/><path d="M1336 828L1344 826 1342 836z"/><path d="M1352 825L1356 832 1350 834z"/><path d="M1524 815L1534 812 1540 820 1534 832 1530 846 1524 836 1522 824zM1540 822L1550 820 1548 834 1540 832z M1537 840L1542 846 1536 848z"/><path d="M1584 812L1590 815 1585 818z"/><path d="M1657 808L1664 812 1670 825 1676 836 1670 840 1663 828 1656 816z"/><path d="M1593 862L1600 852 1612 846 1617 850 1606 858 1604 862z"/><path d="M1646 862L1655 850 1672 843 1680 848 1690 857 1692 862z"/><path d="M1728 862L1735 852 1748 853 1752 862z"/></g></g></svg>
<svg class="r" style="left:1016px;top:751.5px;" width="23" height="30" viewBox="0 0 384 512"><path fill="#d32f2f" d="M172.3 501.7C27 291 0 269.4 0 192 0 86 86 0 192 0s192 86 192 192c0 77.4-27 99-172.3 309.7-9.5 13.8-29.9 13.8-39.5 0zM192 272c44.2 0 80-35.8 80-80s-35.8-80-80-80-80 35.8-80 80 35.8 80 80 80z"/></svg>
<div class="t" style="left:1045.60px;top:757.10px;font-size:16.6px;line-height:22px;font-weight:400;color:#a8c5e2;">Regions</div>
<div class="t" style="left:1048.10px;top:793.00px;font-size:31px;line-height:41px;font-weight:700;color:#0d4f96;">6</div>
<svg class="r" style="left:1018.8px;top:853.5px;" width="18.5" height="12" viewBox="0 0 18.5 12"><path fill="#1976d2" d="M0 0H18.2V3.6H6.2L11 9.5 9 12H3.6L6.8 8.2z"/></svg>
<div class="t" style="left:1048.30px;top:857.30px;font-size:16.6px;line-height:22px;font-weight:400;color:#a8c5e2;">Anomalies</div>
<div class="r" style="left:1837.2px;top:743px;width:35.799999999999955px;height:108.70000000000005px;background:#f0f0f0;border:1px solid #c6c6c6;border-radius:5px"></div>
<div class="r" style="left:1837.2px;top:780px;width:35.799999999999955px;height:1px;background:#cfcfcf"></div>
<div class="r" style="left:1837.2px;top:816.6px;width:35.799999999999955px;height:1.0px;background:#cfcfcf"></div>
<svg class="r" style="left:1849px;top:752.5px;" width="12" height="12" viewBox="0 0 12 12"><path d="M6 1V11M1 6H11" stroke="#111" stroke-width="1.7"/></svg>
<svg class="r" style="left:1851px;top:796px;" width="8" height="4" viewBox="0 0 8 4"><path d="M1 2H7" stroke="#111" stroke-width="1.8"/></svg>
<svg class="r" style="left:1847px;top:827px;" width="16" height="17" viewBox="0 0 16 17"><rect x="0.5" y="0.5" width="15" height="16" rx="1.5" fill="#e6e6e6" stroke="#555" stroke-width="1.1"/><g stroke="#444" stroke-width="0.9" fill="none"><path d="M8 3V14M2.5 8.5H13.5"/><path d="M6.3 4.6L8 2.8 9.7 4.6M6.3 12.4L8 14.2 9.7 12.4M4.3 6.8L2.5 8.5 4.3 10.2M11.7 6.8L13.5 8.5 11.7 10.2"/></g></svg>
</body></html>
